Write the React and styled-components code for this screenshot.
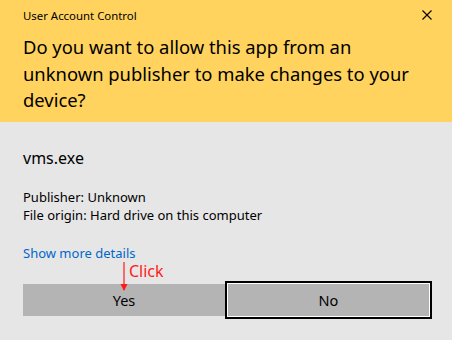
import React from "react";
import styled, { createGlobalStyle } from "styled-components";

const GlobalStyle = createGlobalStyle`
  html, body {
    margin: 0;
    padding: 0;
    background: #e6e6e6;
  }
  body {
    font-family: "Noto Sans", "Open Sans", sans-serif;
    color: #000;
  }
`;

const Dialog = styled.div`
  width: 452px;
  height: 340px;
  background: #e6e6e6;
  display: flex;
  flex-direction: column;
`;

const Header = styled.header`
  background: #ffd35d;
  height: 122px;
  padding: 5px 0 0 23px;
  box-sizing: border-box;
`;

const TitleBar = styled.div`
  display: flex;
  justify-content: space-between;
  align-items: center;
  height: 20px;
  padding-right: 20px;
`;

const Title = styled.span`
  font-size: 11.4px;
`;

const Close = styled.svg`
  width: 10px;
  height: 10px;
`;

const Question = styled.h1`
  margin: 9px 0 0;
  font-size: 18.4px;
  font-weight: 400;
  line-height: 26.5px;
  width: 400px;
`;

const Body = styled.section`
  flex: 1;
  display: flex;
  flex-direction: column;
  padding: 26px 20px 0 23px;
`;

const FileName = styled.div`
  font-size: 16px;
  line-height: 20px;
`;

const Details = styled.div`
  margin-top: 20px;
  font-size: 13px;
  line-height: 18px;
`;

const MoreLink = styled.a`
  margin-top: 20px;
  font-size: 13px;
  line-height: 18px;
  color: #0066cc;
  text-decoration: none;
  align-self: flex-start;
`;

const Buttons = styled.div`
  margin-top: 19px;
  display: grid;
  grid-template-columns: 202px 207px;
  align-items: center;
  position: relative;
`;

const Button = styled.button`
  height: ${({ $focused }) => ($focused ? "38px" : "32px")};
  background: #b4b4b4;
  border: ${({ $focused }) => ($focused ? "2px solid #000" : "none")};
  box-shadow: ${({ $focused }) => ($focused ? "inset 0 0 0 1px #fff" : "none")};
  font-family: inherit;
  font-size: 14.5px;
  color: #000;
  padding: 0;
  box-sizing: border-box;
`;

const Annotation = styled.div`
  position: absolute;
  left: 97px;
  top: -19px;
  display: flex;
  align-items: flex-start;
  gap: 1px;
  color: #ff1a1a;
  font-size: 16px;
  line-height: 18px;
`;

const Arrow = styled.svg`
  width: 8px;
  height: 30px;
`;

export default function App() {
  return (
    <>
      <GlobalStyle />
      <Dialog>
        <Header>
          <TitleBar>
            <Title>User Account Control</Title>
            <Close viewBox="0 0 10 10">
              <path d="M0.5 0.5 L9.5 9.5 M9.5 0.5 L0.5 9.5" stroke="#000" strokeWidth="1.1" fill="none" />
            </Close>
          </TitleBar>
          <Question>
            Do you want to allow this app from an unknown publisher to make changes to your device?
          </Question>
        </Header>
        <Body>
          <FileName>vms.exe</FileName>
          <Details>
            Publisher: Unknown
            <br />
            File origin: Hard drive on this computer
          </Details>
          <MoreLink href="#">Show more details</MoreLink>
          <Buttons>
            <Button>Yes</Button>
            <Button $focused>No</Button>
            <Annotation>
              <Arrow viewBox="0 0 8 30">
                <path d="M4 0 V28" stroke="#ff1a1a" strokeWidth="1.2" />
                <path d="M0.5 22 L4 29 L7.5 22 Z" fill="#ff1a1a" />
              </Arrow>
              <span>Click</span>
            </Annotation>
          </Buttons>
        </Body>
      </Dialog>
    </>
  );
}
